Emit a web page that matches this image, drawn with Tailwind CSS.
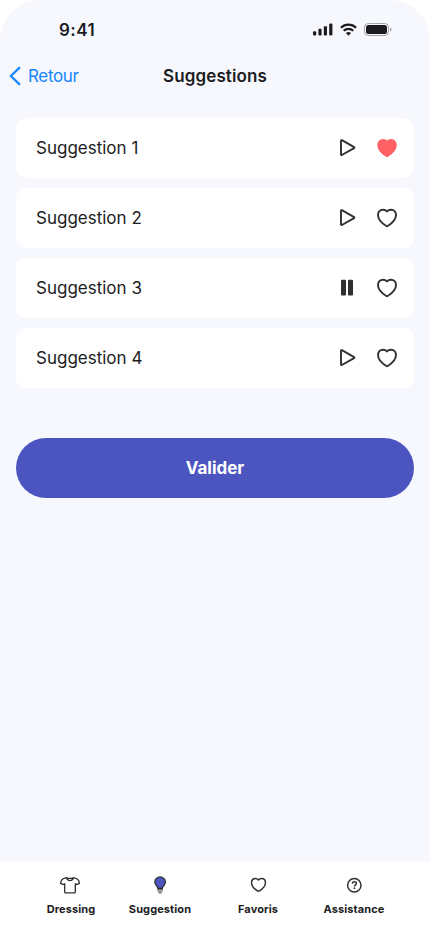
<!DOCTYPE html>
<html lang="fr">
<head>
<meta charset="utf-8">
<meta name="viewport" content="width=device-width, initial-scale=1">
<title>Suggestions</title>
<script src="https://cdn.jsdelivr.net/npm/@tailwindcss/browser@4"></script>
</head>
<body class="bg-white font-['Inter',sans-serif] text-[#1c1c1e]">
<svg class="hidden">
  <symbol id="heart" viewBox="0 0 22 20"><path d="M11 3.500C9.900 2.100 8.500 1.700 7 1.700C4 1.700 2 4 2 7C2 11.500 6 15.300 10.300 18Q11 18.400 11.700 18C16 15.300 20 11.500 20 7C20 4 18 1.700 15 1.700C13.500 1.700 12.100 2.100 11 3.500Z" stroke-linejoin="round"/></symbol>
  <symbol id="play" viewBox="0 0 18 20"><path d="M3 2.700v13.800a.6.6 0 0 0 .9.500l12.200-6.900a.6.6 0 0 0 0-1L3.900 2.200a.6.6 0 0 0-.9.500Z" fill="none" stroke="#303033" stroke-width="1.900" stroke-linejoin="round"/></symbol>
</svg>
<div class="flex h-[932px] w-[430px] flex-col overflow-hidden rounded-t-[40px] bg-[#f7f8fe]">
  <header class="h-[118px] shrink-0">
    <div class="flex h-[59px] items-center justify-between pr-[38px] pl-[59px]">
      <span class="text-[17px] leading-[22px] font-semibold tracking-[0.5px]">9:41</span>
      <div class="flex items-center gap-[7px]">
        <svg class="h-[13px] w-5" viewBox="0 0 20 13" fill="#1c1c1e"><rect x="0" y="8.300" width="3.200" height="4.200" rx="1"/><rect x="5.400" y="5.800" width="3.200" height="6.700" rx="1"/><rect x="10.800" y="3.200" width="3.200" height="9.300" rx="1"/><rect x="16.200" y=".4" width="3.200" height="12.100" rx="1"/></svg>
        <svg class="h-[13px] w-[17px]" viewBox="0 0 17 13" fill="none" stroke="#1c1c1e" stroke-width="2.200"><path d="M.9 4.700a11 11 0 0 1 15.200 0M3.700 7.700a7 7 0 0 1 9.600 0"/><path d="M8.500 12.700 5.900 10.100a3.800 3.800 0 0 1 5.200 0Z" fill="#1c1c1e" stroke="none"/></svg>
        <svg class="h-[13px] w-7" viewBox="0 0 28 13"><rect x=".5" y=".5" width="24" height="12" rx="3.800" fill="none" stroke="#1c1c1e" stroke-opacity=".38"/><rect x="2" y="2" width="21" height="9" rx="2.500" fill="#1c1c1e"/><path d="M26 4.500v4c.8-.3 1.400-1.100 1.400-2s-.6-1.700-1.400-2Z" fill="#1c1c1e" fill-opacity=".4"/></svg>
      </div>
    </div>
    <div class="grid h-[34px] grid-cols-3 items-center">
      <a class="flex items-center gap-[7px] pl-[9px] text-[17px] leading-[22px] tracking-[-0.35px] text-[#1a87ff]">
        <svg class="h-5 w-3" viewBox="0 0 12 20" fill="none" stroke="#1a87ff" stroke-width="2.300" stroke-linecap="round" stroke-linejoin="round"><path d="M10.300 1.800 1.800 10l8.500 8.200"/></svg>
        <span>Retour</span>
      </a>
      <h1 class="text-center text-[17px] leading-[22px] font-semibold tracking-[0.1px]">Suggestions</h1>
    </div>
  </header>
  <main class="flex grow flex-col px-4">
    <ul class="flex flex-col gap-[10px]">
      <li class="flex h-[60px] items-center justify-between rounded-[10px] bg-white pr-4 pl-5">
        <span class="text-[17px] leading-[22px]">Suggestion 1</span>
        <div class="flex items-center gap-5">
          <svg class="h-5 w-[18px]"><use href="#play"/></svg>
          <svg class="h-5 w-[22px]" fill="#ff6164" stroke="#ff6164" stroke-width="1.600"><use href="#heart"/></svg>
        </div>
      </li>
      <li class="flex h-[60px] items-center justify-between rounded-[10px] bg-white pr-4 pl-5">
        <span class="text-[17px] leading-[22px]">Suggestion 2</span>
        <div class="flex items-center gap-5">
          <svg class="h-5 w-[18px]"><use href="#play"/></svg>
          <svg class="h-5 w-[22px]" fill="none" stroke="#303033" stroke-width="1.900"><use href="#heart"/></svg>
        </div>
      </li>
      <li class="flex h-[60px] items-center justify-between rounded-[10px] bg-white pr-4 pl-5">
        <span class="text-[17px] leading-[22px]">Suggestion 3</span>
        <div class="flex items-center gap-5">
          <svg class="h-5 w-[18px]" viewBox="0 0 18 20" fill="#303033"><rect x="3" y="1.800" width="5" height="15.800" rx="1"/><rect x="10" y="1.800" width="5" height="15.800" rx="1"/></svg>
          <svg class="h-5 w-[22px]" fill="none" stroke="#303033" stroke-width="1.900"><use href="#heart"/></svg>
        </div>
      </li>
      <li class="flex h-[60px] items-center justify-between rounded-[10px] bg-white pr-4 pl-5">
        <span class="text-[17px] leading-[22px]">Suggestion 4</span>
        <div class="flex items-center gap-5">
          <svg class="h-5 w-[18px]"><use href="#play"/></svg>
          <svg class="h-5 w-[22px]" fill="none" stroke="#303033" stroke-width="1.900"><use href="#heart"/></svg>
        </div>
      </li>
    </ul>
    <button class="mt-[50px] h-[60px] rounded-full bg-[#4c55bf] text-[17px] leading-[22px] font-bold text-white">Valider</button>
  </main>
  <nav class="flex h-[70px] shrink-0 bg-white pt-[13px] pl-[25px] text-[11px] leading-[14px] font-bold tracking-[0.1px]">
    <a class="flex w-[92px] flex-col items-center gap-[6px] pt-px">
      <svg class="mr-[3px] h-5 w-[22px]" viewBox="0 0 22 20" fill="none" stroke="#303033" stroke-width="1.300" stroke-linejoin="round"><path d="M7.500 1.700C5 2.200 3.300 2.800 2.400 4.300L1.500 7.400l3 1.200 1.200-.9v8.200q0 .9.900.9h8.800q.9 0 .9-.9V7.700l1.200.9 3-1.200-.9-3.100c-.9-1.500-2.600-2.100-5.100-2.600-.7 3.900-6.300 3.900-7 0Z"/><path d="M7.500 1.800c2.200.8 4.800.8 7 0"/></svg>
      <span>Dressing</span>
    </a>
    <a class="flex w-[86px] flex-col items-center gap-[6px] pt-px">
      <svg class="h-5 w-4" viewBox="0 0 16 20" fill="none"><path d="M5.900 12.300c0-2-3.100-2.900-3.100-6.300a5.300 5.100 0 0 1 10.600 0c0 3.400-3.100 4.300-3.100 6.300Z" fill="#4c55bf" stroke="#303033" stroke-width="1.300"/><path d="M5.200 13.500h5.800M5.500 15.200h5.200M6.600 16.800h3" stroke="#646468" stroke-width="1.200"/></svg>
      <span>Suggestion</span>
    </a>
    <a class="flex w-[110px] flex-col items-center gap-[6px] pt-px">
      <svg class="h-5 w-[17px] pt-px pb-[3px]" fill="none" stroke="#303033" stroke-width="1.900"><use href="#heart"/></svg>
      <span>Favoris</span>
    </a>
    <a class="flex w-[82px] flex-col items-center gap-[6px] pt-px">
      <svg class="h-5 w-4" viewBox="0 0 16 20" fill="none" stroke="#303033"><circle cx="8.300" cy="9.300" r="6.700" stroke-width="1.500"/><path d="M6.400 7.700c0-2.600 4-2.400 4-.2 0 1.400-2 1.400-2 2.900" stroke-width="1.400"/><circle cx="8.400" cy="12.200" r=".85" fill="#303033" stroke="none"/></svg>
      <span>Assistance</span>
    </a>
  </nav>
</div>
</body>
</html>
